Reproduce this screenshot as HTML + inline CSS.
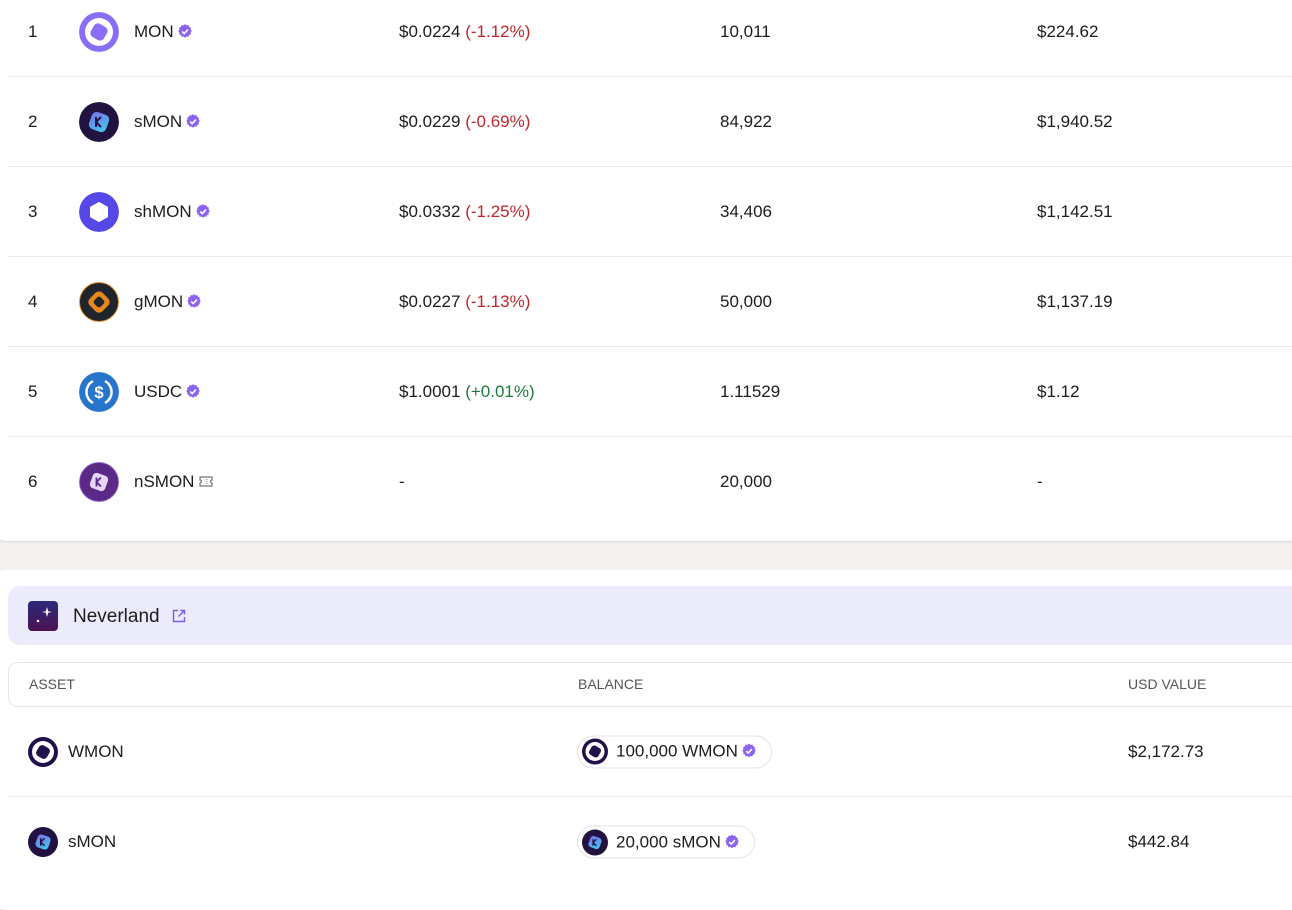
<!DOCTYPE html>
<html><head><meta charset="utf-8"><style>
*{box-sizing:border-box;margin:0;padding:0}
body{width:1292px;height:888px;overflow:hidden;background:#f3f2f1;font-family:"Liberation Sans",sans-serif;color:#1c1c1c;font-size:17px;position:relative}
.card{position:absolute;left:-8px;width:1320px;background:#fff;border-radius:14px;box-shadow:0 1px 2px rgba(0,0,0,.12)}
.row{position:absolute;left:8px;right:0;height:90px;border-bottom:1px solid #ececec}
.row>*{position:absolute;top:50%;transform:translateY(-50%);white-space:nowrap}
.ic{width:40px;height:40px;border-radius:50%}
.red{color:#c0262d}.grn{color:#1e7a3e}
.vb{display:inline-block;vertical-align:-2px;margin-left:4px}
.hd{font-size:14px;color:#555}
.pill{border:1px solid #e2e0ee;border-radius:17px;height:33px;padding:0 14px 0 4px;display:flex;align-items:center;gap:8px}
</style></head><body>
<svg width="0" height="0" style="position:absolute"><defs>
<g id="vb"><path d="M7 0.5l1.6 1.3 2-.3.8 1.9 1.9.8-.3 2L14.3 7.8l-1.3 1.6.3 2-1.9.8-.8 1.9-2-.3L7 15.1 5.4 13.8l-2 .3-.8-1.9-1.9-.8.3-2L-.3 7.8 1 6.2.7 4.2l1.9-.8.8-1.9 2 .3z" fill="#8a63f0" transform="translate(0.5,-0.3) scale(0.93)"/><path d="M4.2 7.6l2 2 3.8-4" stroke="#fff" stroke-width="1.6" fill="none"/></g>
</defs></svg>

<div class="card" style="top:-20px;height:561px">
<div class="row" style="left:16px;top:7px">
<span style="left:20px">1</span>
<svg class="ic" style="left:71px" viewBox="0 0 40 40"><circle cx="20" cy="20" r="20" fill="#8a6ff6"/><circle cx="20" cy="20" r="14" fill="#fff"/><rect x="12.5" y="12.5" width="15" height="15" rx="4.5" fill="#8a6ff6" transform="rotate(30 20 20)"/></svg>
<span style="left:126px">MON<svg class="vb" width="15" height="15"><use href="#vb"/></svg></span>
<span style="left:391px">$0.0224 <span class="red">(-1.12%)</span></span>
<span style="left:712px">10,011</span><span style="left:1029px">$224.62</span>
</div>
<div class="row" style="left:16px;top:97px">
<span style="left:20px">2</span>
<svg class="ic" style="left:71px" viewBox="0 0 40 40"><defs><linearGradient id="g1" x1="0" y1="0" x2="1" y2="1"><stop offset="0" stop-color="#7b6cf0"/><stop offset="1" stop-color="#3fd0e8"/></linearGradient></defs><circle cx="20" cy="20" r="20" fill="#22123f"/><rect x="11" y="11" width="18" height="18" rx="5" fill="url(#g1)" transform="rotate(20 20 20)"/><path d="M17 15v10M17 20l5-5M17 20l5 5" stroke="#22123f" stroke-width="2" fill="none"/></svg>
<span style="left:126px">sMON<svg class="vb" width="15" height="15"><use href="#vb"/></svg></span>
<span style="left:391px">$0.0229 <span class="red">(-0.69%)</span></span>
<span style="left:712px">84,922</span><span style="left:1029px">$1,940.52</span>
</div>
<div class="row" style="left:16px;top:187px">
<span style="left:20px">3</span>
<svg class="ic" style="left:71px" viewBox="0 0 40 40"><circle cx="20" cy="20" r="20" fill="#5548e6"/><path d="M20 11l8 4.5v9L20 29l-8-4.5v-9z" fill="#fff" stroke="#fff" stroke-width="2" stroke-linejoin="round"/></svg>
<span style="left:126px">shMON<svg class="vb" width="15" height="15"><use href="#vb"/></svg></span>
<span style="left:391px">$0.0332 <span class="red">(-1.25%)</span></span>
<span style="left:712px">34,406</span><span style="left:1029px">$1,142.51</span>
</div>
<div class="row" style="left:16px;top:277px">
<span style="left:20px">4</span>
<svg class="ic" style="left:71px" viewBox="0 0 40 40"><circle cx="20" cy="20" r="19.5" fill="#1e252c" stroke="#e8871e"/><rect x="11" y="11" width="18" height="18" rx="5" fill="#e8871e" transform="rotate(45 20 20)"/><rect x="15.5" y="15.5" width="9" height="9" rx="2.5" fill="#1e252c" transform="rotate(45 20 20)"/></svg>
<span style="left:126px">gMON<svg class="vb" width="15" height="15"><use href="#vb"/></svg></span>
<span style="left:391px">$0.0227 <span class="red">(-1.13%)</span></span>
<span style="left:712px">50,000</span><span style="left:1029px">$1,137.19</span>
</div>
<div class="row" style="left:16px;top:367px">
<span style="left:20px">5</span>
<svg class="ic" style="left:71px" viewBox="0 0 40 40"><circle cx="20" cy="20" r="20" fill="#2775ca"/><path d="M14 9a12.5 12.5 0 0 0 0 22M26 9a12.5 12.5 0 0 1 0 22" stroke="#fff" stroke-width="2.4" fill="none"/><text x="20" y="26" font-size="17" font-weight="bold" fill="#fff" text-anchor="middle" font-family="Liberation Sans">$</text></svg>
<span style="left:126px">USDC<svg class="vb" width="15" height="15"><use href="#vb"/></svg></span>
<span style="left:391px">$1.0001 <span class="grn">(+0.01%)</span></span>
<span style="left:712px">1.11529</span><span style="left:1029px">$1.12</span>
</div>
<div class="row" style="left:16px;top:457px;border:none">
<span style="left:20px">6</span>
<svg class="ic" style="left:71px" viewBox="0 0 40 40"><circle cx="20" cy="20" r="19.5" fill="#5b2a86" stroke="#8c5bc0"/><rect x="12" y="12" width="16" height="16" rx="4" fill="#e6d5f5" transform="rotate(20 20 20)"/><path d="M17.5 15.5v9M17.5 20l4.5-4.5M17.5 20l4.5 4.5" stroke="#5b2a86" stroke-width="1.8" fill="none"/></svg>
<span style="left:126px">nSMON<svg style="margin-left:5px;vertical-align:0" width="14" height="11" viewBox="0 0 14 11"><path d="M1 1h12v3a1.5 1.5 0 0 0 0 3v3H1V7a1.5 1.5 0 0 0 0-3z" fill="none" stroke="#777" stroke-width="1.2"/><path d="M8 3v5" stroke="#777" stroke-dasharray="1 1"/></svg></span>
<span style="left:391px">-</span>
<span style="left:712px">20,000</span><span style="left:1029px">-</span>
</div>
</div>

<div class="card" style="top:570px;height:340px">
<div style="position:absolute;left:16px;top:16px;width:1320px;height:59px;background:#ecebfb;border-radius:12px">
<svg style="position:absolute;left:20px;top:15px" width="30" height="30" viewBox="0 0 30 30"><defs><linearGradient id="g2" x1="0" y1="0" x2="0" y2="1"><stop offset="0" stop-color="#2a2a7a"/><stop offset="1" stop-color="#4b1352"/></linearGradient></defs><rect width="30" height="30" rx="4" fill="url(#g2)"/><path d="M19 6l1.2 4.3L24 11l-3.8.7L19 16l-1.2-4.3L14 11l3.8-.7z" fill="#fff"/><circle cx="10" cy="20" r="1.3" fill="#fff"/></svg>
<span style="position:absolute;left:65px;top:20px;font-size:19px">Neverland</span>
<svg style="position:absolute;left:164px;top:23px" width="14" height="14" viewBox="0 0 14 14"><path d="M6 1.5H1.5v11h11V8M8.5 1.5h4v4M12.5 1.5L6.5 7.5" stroke="#7b5fe0" stroke-width="1.4" fill="none"/></svg>
</div>
<div style="position:absolute;left:16px;top:92px;width:1320px;height:45px;border:1px solid #e6e6e6;border-radius:10px">
<span class="hd" style="position:absolute;left:20px;top:13px">ASSET</span>
<span class="hd" style="position:absolute;left:569px;top:13px">BALANCE</span>
<span class="hd" style="position:absolute;left:1119px;top:13px">USD VALUE</span>
</div>
<div class="row" style="left:16px;top:137px;border-bottom:1px solid #ececec">
<svg style="left:20px;width:30px;height:30px" viewBox="0 0 30 30"><circle cx="15" cy="15" r="15" fill="#21104a"/><circle cx="15" cy="15" r="11" fill="#fff"/><rect x="9" y="9" width="12" height="12" rx="3.5" fill="#21104a" transform="rotate(30 15 15)"/></svg>
<span style="left:60px">WMON</span>
<div class="pill" style="left:569px"><svg width="26" height="26" viewBox="0 0 30 30"><circle cx="15" cy="15" r="15" fill="#21104a"/><circle cx="15" cy="15" r="11" fill="#fff"/><rect x="9" y="9" width="12" height="12" rx="3.5" fill="#21104a" transform="rotate(30 15 15)"/></svg><span>100,000 WMON<svg class="vb" width="15" height="15"><use href="#vb"/></svg></span></div>
<span style="left:1120px">$2,172.73</span>
</div>
<div class="row" style="left:16px;top:227px;border:none">
<svg style="left:20px;width:30px;height:30px" viewBox="0 0 40 40"><circle cx="20" cy="20" r="20" fill="#22123f"/><rect x="11" y="11" width="18" height="18" rx="5" fill="url(#g1)" transform="rotate(20 20 20)"/><path d="M17 15v10M17 20l5-5M17 20l5 5" stroke="#22123f" stroke-width="2" fill="none"/></svg>
<span style="left:60px">sMON</span>
<div class="pill" style="left:569px"><svg width="26" height="26" viewBox="0 0 40 40"><circle cx="20" cy="20" r="20" fill="#22123f"/><rect x="11" y="11" width="18" height="18" rx="5" fill="url(#g1)" transform="rotate(20 20 20)"/><path d="M17 15v10M17 20l5-5M17 20l5 5" stroke="#22123f" stroke-width="2" fill="none"/></svg><span>20,000 sMON<svg class="vb" width="15" height="15"><use href="#vb"/></svg></span></div>
<span style="left:1120px">$442.84</span>
</div>
</div>
</body></html>
